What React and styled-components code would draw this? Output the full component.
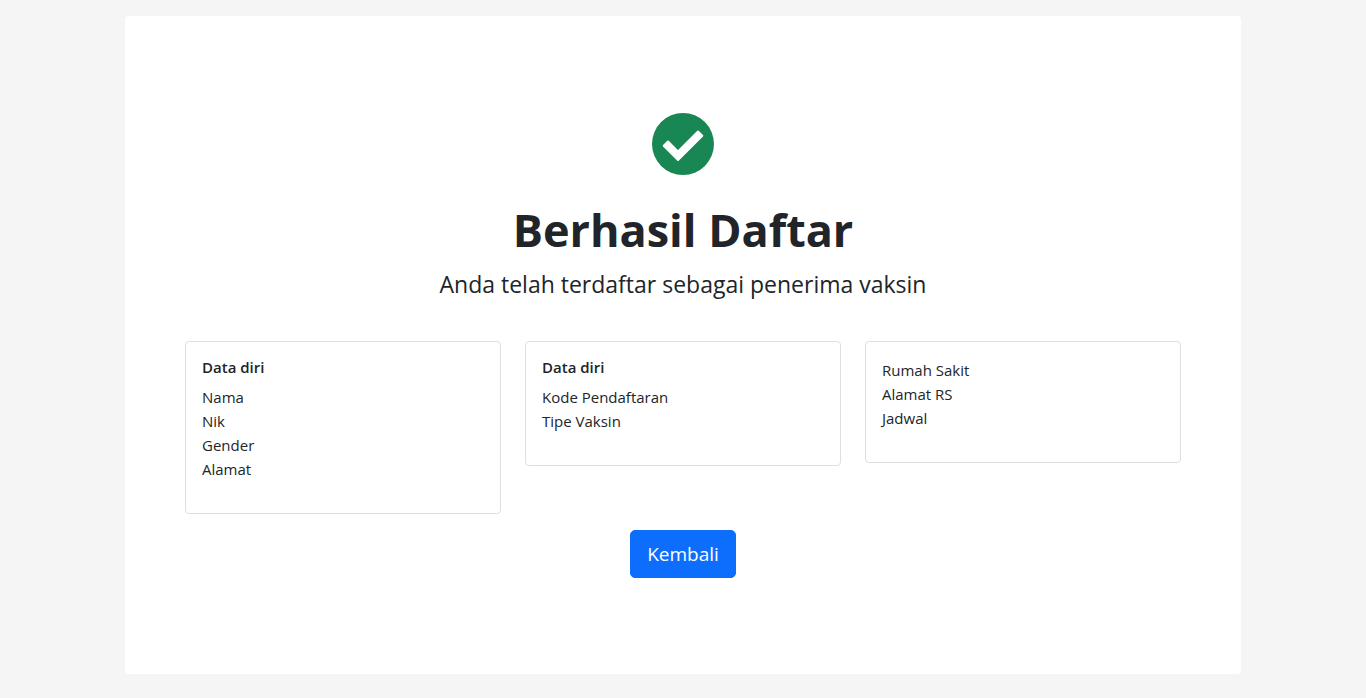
import React from "react";
import styled, { createGlobalStyle } from "styled-components";

const GlobalStyle = createGlobalStyle`
  *, *::before, *::after { box-sizing: border-box; }
  body {
    margin: 0;
    background: #f5f5f5;
    color: #212529;
    font-family: "Segoe UI", "Open Sans", "Noto Sans", sans-serif;
    font-size: 15px;
    line-height: 24px;
  }
`;

const Page = styled.main`
  max-width: 1140px;
  margin: 0 auto;
  padding: 16px 12px 24px;
`;

const Panel = styled.section`
  display: flex;
  flex-direction: column;
  align-items: center;
  padding: 96px 60px;
  background: #fff;
  border-radius: 4px;
`;

const SuccessIcon = styled.svg`
  display: block;
  width: 64px;
  height: 64px;
  color: #198754;
`;

const Title = styled.h1`
  margin: 24px 0 8px;
  font-size: 45px;
  line-height: 60px;
  font-weight: 700;
  text-align: center;
`;

const Lead = styled.p`
  margin: 0 0 40px;
  font-size: 23px;
  line-height: 33px;
  text-align: center;
`;

const Cards = styled.div`
  display: grid;
  grid-template-columns: repeat(3, minmax(0, 1fr));
  align-items: start;
  gap: 24px;
  width: 100%;
`;

const Card = styled.article`
  padding: 16px 16px 32px;
  border: 1px solid #dfdfdf;
  border-radius: 4px;
`;

const CardTitle = styled.h2`
  margin: 0 0 8px;
  font-size: 15px;
  line-height: 19px;
  font-weight: 600;
`;

const Fields = styled.ul`
  margin: 0;
  padding: 0;
  list-style: none;
`;

const BackButton = styled.button`
  margin-top: 16px;
  padding: 8px 16px;
  border: 1px solid #0d6efd;
  border-radius: 5px;
  background: #0d6efd;
  color: #fff;
  font-family: inherit;
  font-size: 19px;
  line-height: 30px;
`;

const groups = [
  { title: "Data diri", fields: ["Nama", "Nik", "Gender", "Alamat"] },
  { title: "Data diri", fields: ["Kode Pendaftaran", "Tipe Vaksin"] },
  { fields: ["Rumah Sakit", "Alamat RS", "Jadwal"] },
];

export default function App() {
  return (
    <>
      <GlobalStyle />
      <Page>
        <Panel>
          <SuccessIcon viewBox="0 0 64 64" aria-hidden="true">
            <circle cx="32" cy="32" r="31" fill="currentColor" />
            <path
              d="M12.7 33.7 17 29.5 27 39.5 47 19.5 51.3 23.7 27 48Z"
              fill="#fff"
              stroke="#fff"
              strokeWidth="2"
              strokeLinejoin="round"
            />
          </SuccessIcon>
          <Title>Berhasil Daftar</Title>
          <Lead>Anda telah terdaftar sebagai penerima vaksin</Lead>
          <Cards>
            {groups.map((group, index) => (
              <Card key={index}>
                {group.title && <CardTitle>{group.title}</CardTitle>}
                <Fields>
                  {group.fields.map((field) => (
                    <li key={field}>{field}</li>
                  ))}
                </Fields>
              </Card>
            ))}
          </Cards>
          <BackButton type="button">Kembali</BackButton>
        </Panel>
      </Page>
    </>
  );
}
